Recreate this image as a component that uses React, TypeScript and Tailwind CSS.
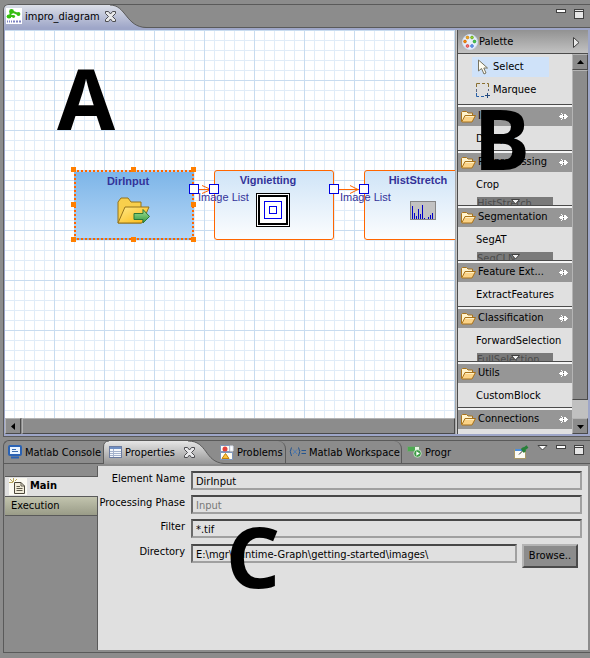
import type { ReactNode } from "react";

const UI_FONT = "font-['DejaVu_Sans_Condensed','DejaVu_Sans',sans-serif]";
const DIAGRAM_FONT = "font-['Liberation_Sans',Arial,sans-serif]";

/* ---------- icons ---------- */

function DiagramIcon() {
  return (
    <svg width="16" height="16" viewBox="0 0 16 16" className="shrink-0">
      <rect width="16" height="16" fill="#fff" />
      <path d="M5 3 L4 9 M5 3 L12 6 M2 8 H7" stroke="#3cb81c" strokeWidth="2" fill="none" />
      <circle cx="5.5" cy="3.5" r="2.4" fill="#35c00f" />
      <circle cx="12.5" cy="6" r="1.9" fill="#35c00f" />
      <ellipse cx="3" cy="8.5" rx="2.4" ry="1.9" fill="#35c00f" />
      <ellipse cx="7.5" cy="8.5" rx="1.6" ry="1.4" fill="#35c00f" />
      <path d="M1 13.5h1M3 13.5h1M5 13.5h1M7 13.5h2M10 13.5h2M13 13.5h2" stroke="#7a80c0" strokeWidth="2" />
    </svg>
  );
}

function CloseIcon() {
  return (
    <svg width="11" height="11" viewBox="0 0 11 11">
      <path
        d="M.5 .5H3.5L5.5 3 7.500 .5H10.500V2.500L7.500 5.500 10.500 8.500V10.500H7.500L5.500 8 3.500 10.500H.5V8.500L3.500 5.500 .5 2.500Z"
        fill="#e8e8ea"
        stroke="#4c4c50"
      />
    </svg>
  );
}

function MinimizeIcon() {
  return (
    <svg width="10" height="4" viewBox="0 0 10 4">
      <rect x=".5" y=".5" width="9" height="3" fill="#fff" stroke="#404040" />
    </svg>
  );
}

function MaximizeIcon() {
  return (
    <svg width="10" height="10" viewBox="0 0 10 10">
      <rect x=".5" y=".5" width="9" height="9" fill="#e6e6e6" stroke="#404040" />
      <path d="M1 2.500H9" stroke="#404040" />
    </svg>
  );
}

function PaletteIcon() {
  return (
    <svg width="16" height="16" viewBox="0 0 16 16">
      <circle cx="8" cy="8" r="7.500" fill="#e9eff9" stroke="#cddcf2" />
      <circle cx="5.500" cy="3.500" r="1.400" fill="#f3a51c" stroke="#b87307" strokeWidth=".6" />
      <circle cx="10" cy="3.500" r="1.400" fill="#9bd32d" stroke="#4f9410" strokeWidth=".6" />
      <circle cx="3" cy="7.500" r="1.400" fill="#ff8b00" stroke="#b85b00" strokeWidth=".6" />
      <circle cx="12.500" cy="7.500" r="1.400" fill="#44cb4a" stroke="#148a25" strokeWidth=".6" />
      <circle cx="5.500" cy="12" r="1.400" fill="#f17878" stroke="#cc1a1a" strokeWidth=".6" />
      <circle cx="10" cy="12" r="1.400" fill="#7aa5f0" stroke="#1755c2" strokeWidth=".6" />
    </svg>
  );
}

function CursorIcon() {
  return (
    <svg width="12" height="16" viewBox="0 0 12 16">
      <path
        d="M1.500 1V12L4.500 9.500 7 15 9 14 6.800 9H10.500Z"
        fill="#fffdf2"
        stroke="#77735f"
      />
    </svg>
  );
}

function MarqueeIcon() {
  return (
    <svg width="15" height="15" viewBox="0 0 15 15" fill="none">
      <path d="M.5 4V.5H4M6 .5H9M11 .5H12.500V4" stroke="#8a7030" />
      <path d="M.5 6V9M12.500 6V8" stroke="#5c6880" />
      <path d="M.5 10V13.500H3M5 13.500H8" stroke="#2760a8" />
      <path d="M11.500 10V15M9 12.500H14" stroke="#24497c" />
    </svg>
  );
}

function FolderIcon() {
  return (
    <svg width="15" height="12" viewBox="0 0 15 12" className="shrink-0">
      <path d="M.5 10.500V1.500L1.500 .5H5.500L7 2H11.500V4.500" fill="#fff3cc" stroke="#a9731c" />
      <path d="M.8 10.800L4 4.500H14.500L11 11H1.200Z" fill="#fbd387" stroke="#a9731c" />
      <path d="M4.600 5.500H13" stroke="#fff0c4" />
    </svg>
  );
}

function PinIcon() {
  return (
    <svg width="9" height="7" viewBox="0 0 9 7" shapeRendering="crispEdges" className="shrink-0">
      <path d="M0 3H9V4H0ZM1 2H3V1H2V0H3V1H4V6H3V7H2V6H3V5H1ZM5 1H6V2H8V5H6V6H5Z" fill="#fff" />
      <path d="M6 1H7V2H8V5H7V6H6Z" fill="#fff" />
      <path d="M4 2H5V3H4ZM4 4H5V5H4Z" fill="#6e6e6e" />
    </svg>
  );
}

function OpenFolderArrowIcon() {
  return (
    <svg width="33" height="28" viewBox="0 0 33 28">
      <defs>
        <linearGradient id="folderFill" x1="0" y1="0" x2="1" y2="1">
          <stop offset="0" stopColor="#ffe98a" />
          <stop offset="1" stopColor="#fbb90f" />
        </linearGradient>
        <linearGradient id="arrowFill" x1="0" y1="0" x2="0" y2="1">
          <stop offset="0" stopColor="#a9e594" />
          <stop offset="1" stopColor="#2c9440" />
        </linearGradient>
      </defs>
      <path d="M1 26V5L4 1H11L14 5H24V12L24 26Z" fill="#f8cf4c" stroke="#94721a" />
      <path d="M1 26L8 10H32L25 26Z" fill="url(#folderFill)" stroke="#94721a" />
      <path d="M17 16.500H26V12.500L32.500 19.500 26 26V22.500H17Z" fill="url(#arrowFill)" stroke="#2c7838" />
    </svg>
  );
}

function VignetteIcon() {
  return (
    <svg width="34" height="34" viewBox="0 0 34 34" fill="none">
      <rect x=".5" y=".5" width="33" height="33" fill="#fff" stroke="#000" />
      <rect x="3" y="3" width="28" height="28" stroke="#000" strokeWidth="2" />
      <rect x="8.500" y="8.500" width="17" height="17" stroke="#00e" />
      <rect x="13.500" y="13.500" width="7" height="7" stroke="#00e" />
    </svg>
  );
}

function HistogramIcon() {
  return (
    <svg width="26" height="19" viewBox="0 0 26 19">
      <rect x=".5" y=".5" width="25" height="18" fill="#c2c2c2" stroke="#858585" />
      <path
        d="M2.500 18V5M4.500 18V12M6.500 18V15M8.500 18V8M10.500 18V13M12.500 18V4M14.500 18V17M18.500 18V16M20.500 18V14M22.500 18V12"
        stroke="#0000c8"
      />
    </svg>
  );
}

function ConsoleIcon() {
  return (
    <svg width="14" height="14" viewBox="0 0 14 14">
      <rect x="1" y="1" width="12" height="9" rx="1" fill="#e9f3ff" stroke="#2a62b4" strokeWidth="2" />
      <path d="M4 4.500H8M4 6.500H10" stroke="#3b6cae" />
      <path d="M3 12.500H11" stroke="#2a62b4" strokeWidth="2" />
    </svg>
  );
}

function TableIcon() {
  return (
    <svg width="13" height="12" viewBox="0 0 13 12">
      <rect x=".5" y=".5" width="12" height="11" fill="#f4f7fb" stroke="#6b7ba0" />
      <rect x="1" y="1" width="11" height="2" fill="#6f8fc4" />
      <path d="M1 5.500H12M1 7.500H12M1 9.500H12M4.500 3V11" stroke="#a4b2cc" />
    </svg>
  );
}

function ProblemsIcon() {
  return (
    <svg width="14" height="15" viewBox="0 0 14 15">
      <path d="M.5 .5H9.500V6.500H.5ZM.5 7.500H12.500V14.500H.5Z" fill="#fffdf4" stroke="#7d96bd" />
      <path d="M10 1H13V6H10Z" fill="#fff" stroke="#dfe6f2" />
      <circle cx="5" cy="4" r="2.500" fill="#e2423e" />
      <path d="M5.500 8.500L9 13.500H2Z" fill="#fbc23c" stroke="#c4820c" />
    </svg>
  );
}

function VariablesIcon() {
  return (
    <svg width="17" height="10" viewBox="0 0 17 10" fill="none" stroke="#25558f">
      <path d="M2.500 .5Q0 4.500 2.500 9M9.500 .5Q12 4.500 9.500 9" />
      <path d="M4 2.500L8 7M8 2.500L4 7" stroke="#4c7ab4" />
      <path d="M12.500 3.500H17M12.500 6.500H17" />
    </svg>
  );
}

function ProgressIcon() {
  return (
    <svg width="15" height="12" viewBox="0 0 15 12">
      <rect x=".5" y=".5" width="12" height="5" fill="#e8f4e4" stroke="#7d9a7d" />
      <rect x="1" y="1" width="7" height="4" fill="#4ea952" />
      <circle cx="10.500" cy="7.500" r="3.800" fill="#3f9c47" stroke="#d6ecd6" strokeWidth=".8" />
      <path d="M9.300 5.300V9.700L12.800 7.500Z" fill="#fff" />
    </svg>
  );
}

function PinViewIcon() {
  return (
    <svg width="15" height="14" viewBox="0 0 15 14">
      <rect x=".5" y="4.500" width="11" height="9" fill="#fdfcf6" stroke="#a89868" />
      <rect x="1" y="4" width="8" height="2" fill="#4d8edb" />
      <path d="M5 9.500L9 5.500" stroke="#333" />
      <path d="M8 3L11 7M9.500 4.500L13.500 1.500" stroke="#28803a" strokeWidth="3" />
    </svg>
  );
}

function MenuIcon() {
  return (
    <svg width="11" height="6" viewBox="0 0 11 6">
      <path d="M1 .5H10L5.500 5Z" fill="#fff" stroke="#404040" />
    </svg>
  );
}

function PageIcon() {
  return (
    <svg width="18" height="17" viewBox="0 0 18 17" className="shrink-0">
      <rect width="18" height="17" fill="#fbfaf2" />
      <path d="M5.500 4.500H12L15.500 8V15.500H5.500Z" fill="#f2edda" stroke="#4b473a" />
      <path d="M12 4.500V8H15.500M7.500 8.500H11M7.500 10.500H13.500M7.500 12.500H13.500" stroke="#5f5b4c" fill="none" />
      <path d="M4.500 0V4M0 4.500H4M1 1L4 4M8 1L6 3" stroke="#b9a860" />
    </svg>
  );
}

/* ---------- scroll bars ---------- */

const RAISED =
  "border border-t-[#b4b4b4] border-l-[#b4b4b4] border-r-[#4a4a4a] border-b-[#4a4a4a] bg-[#8c8c8c]";

function ArrowButton({ label, path }: { label: string; path: string }) {
  return (
    <button aria-label={label} className={`flex size-4 shrink-0 items-center justify-center ${RAISED}`}>
      <svg width="7" height="7" viewBox="0 0 7 7">
        <path d={path} fill="#000" />
      </svg>
    </button>
  );
}

/* ---------- diagram ---------- */

function Node({ title, place, look, icon }: { title: string; place: string; look: string; icon: ReactNode }) {
  return (
    <div className={`absolute top-[140px] flex h-[70px] w-[120px] flex-col ${place} ${look}`}>
      <h3 className="mt-[3px] pr-3 text-center leading-3 font-bold">{title}</h3>
      <div className="flex h-12 items-center justify-center pr-[2px]">{icon}</div>
    </div>
  );
}

const HANDLES = [
  "left-[66px] top-[137px]",
  "left-[126px] top-[137px]",
  "left-[186px] top-[137px]",
  "left-[66px] top-[172px]",
  "left-[186px] top-[172px]",
  "left-[66px] top-[207px]",
  "left-[126px] top-[207px]",
  "left-[186px] top-[207px]",
];
const PORTS = ["left-[184px]", "left-[204px]", "left-[324px]", "left-[354px]"];

function Canvas() {
  return (
    <div
      className={`relative min-h-0 flex-1 overflow-hidden bg-white text-[11px] text-[#333399] ${DIAGRAM_FONT}`}
    >
      <svg className="absolute inset-0 size-full">
        <defs>
          <pattern id="grid" width="50" height="50" patternUnits="userSpaceOnUse">
            <path
              d="M9.500 0V50M19.500 0V50M29.500 0V50M39.500 0V50M0 10.500H50M0 20.500H50M0 30.500H50M0 40.500H50"
              stroke="#e0ecf8"
            />
            <path d="M49.500 0V50M0 .5H50" stroke="#c8dcf0" />
          </pattern>
        </defs>
        <rect width="100%" height="100%" fill="url(#grid)" />
      </svg>
      <Node
        title="DirInput"
        place="left-[69px]"
        look="border-2 border-dotted border-[#ff6600] bg-linear-to-b from-[#7db5e8] to-[#b4d6f6]"
        icon={<OpenFolderArrowIcon />}
      />
      <Node
        title="Vignietting"
        place="left-[209px]"
        look="rounded-[3px] border border-[#ff6600] bg-linear-to-b from-[#cfe4f7] to-[#fcfdfe]"
        icon={<VignetteIcon />}
      />
      <Node
        title="HistStretch"
        place="left-[359px]"
        look="rounded-[3px] border border-[#ff6600] bg-linear-to-b from-[#cfe4f7] to-[#fcfdfe]"
        icon={<HistogramIcon />}
      />
      <svg width="200" height="12" viewBox="0 0 200 12" className="absolute top-[153px] left-[180px]" fill="none">
        <path d="M14 6.500H24M17 2.500L26 6.500 17 10.500" stroke="#ff6600" />
        <path d="M154 6.500H174M165 2.500L173 6.500 165 10.500" stroke="#ff6600" />
      </svg>
      {HANDLES.map((h) => (
        <span key={h} className={`absolute size-[5px] bg-[#ff7f00] ${h}`} />
      ))}
      {PORTS.map((p) => (
        <span key={p} className={`absolute top-[154px] size-[10px] border border-[#0000e0] bg-white ${p}`} />
      ))}
      <span className="absolute top-[161px] left-[193px] leading-3">Image List</span>
      <span className="absolute top-[161px] left-[335px] leading-3">Image List</span>
    </div>
  );
}

/* ---------- palette ---------- */

function Drawer({ title, item, more }: { title: string; item?: string; more?: string }) {
  return (
    <section className="shrink-0">
      <div className="h-px bg-[#4c4c4c]" />
      <div className="h-[2px] bg-[#f4f4f4]" />
      <h3 className="flex h-[19px] items-center bg-[#969696] pr-1 pl-[3px]">
        <FolderIcon />
        <span className="ml-[2px] flex-1 whitespace-nowrap">{title}</span>
        <PinIcon />
      </h3>
      <div className="h-6 pt-[2px] pl-[18px]">
        {item && <button className="block h-[22px] whitespace-nowrap text-black">{item}</button>}
      </div>
      {more && (
        <div className="flex h-[9px] items-end pl-[19px]">
          <div className="relative h-2 w-[76px] overflow-hidden bg-[#7a7a7a] leading-[14px] text-[#4c4c4c]">
            <span>{more}</span>
            <svg width="9" height="6" viewBox="0 0 9 6" className="absolute top-[2px] left-[34px]">
              <path d="M.5 .5H8.500L4.500 5Z" fill="#f0f0f0" stroke="#404040" />
            </svg>
          </div>
        </div>
      )}
    </section>
  );
}

function Palette() {
  return (
    <aside className="flex w-[130px] shrink-0 flex-col bg-[#e0e0e0]">
      <h2 className="flex h-6 shrink-0 items-center border-b border-[#4c4c4c] bg-linear-to-b from-[#929292] to-[#c2c2c2] pt-px pr-2 pl-1">
        <PaletteIcon />
        <span className="ml-px flex-1">Palette</span>
        <svg width="7" height="11" viewBox="0 0 7 11">
          <path d="M.5 .5V10.500L6 5.500Z" fill="#e8e8e8" stroke="#404040" />
        </svg>
      </h2>
      <div className="flex min-h-0 flex-1">
        <div className="flex min-w-0 flex-1 flex-col overflow-hidden">
          <div className="flex h-[50px] shrink-0 flex-col gap-[3px] pt-[3px] pl-[14px]">
            <button className="flex h-5 w-[77px] items-center gap-1 bg-[#cfe2f9] pl-[5px]">
              <CursorIcon />
              Select
            </button>
            <button className="flex h-5 w-[77px] items-center gap-[2px] pl-1">
              <MarqueeIcon />
              Marquee
            </button>
          </div>
          <Drawer title="Input" item="DirInput" />
          <Drawer title="Preprocessing" item="Crop" more="HistStretch" />
          <Drawer title="Segmentation" item="SegAT" more="SegCLN" />
          <Drawer title="Feature Ext..." item="ExtractFeatures" />
          <Drawer title="Classification" item="ForwardSelection" more="FullSelection" />
          <Drawer title="Utils" item="CustomBlock" />
          <Drawer title="Connections" />
        </div>
        <div className="flex w-4 shrink-0 flex-col bg-[#c0c0c0]">
          <ArrowButton label="Scroll up" path="M0 5L3.500 1 7 5Z" />
          <div className={`flex-1 ${RAISED}`} />
          <div className="h-[18px]" />
          <ArrowButton label="Scroll down" path="M0 2L3.500 6 7 2Z" />
        </div>
      </div>
    </aside>
  );
}

/* ---------- editor ---------- */

function Editor() {
  return (
    <section className="ml-[3px] flex min-h-0 flex-1 flex-col rounded-tl-md border-t border-b border-l border-[#5a5a5a]">
      <header className="relative flex h-[23px] shrink-0 items-center border-b border-[#5a5a5a] pr-[6px]">
        <svg width="144" height="23" viewBox="0 0 144 23" className="absolute top-0 left-0">
          <defs>
            <linearGradient id="editorTab" x1="0" y1="0" x2="0" y2="1">
              <stop offset="0" stopColor="#dcdfe8" />
              <stop offset="1" stopColor="#9ea6c8" />
            </linearGradient>
          </defs>
          <path d="M0 23V5Q0 0 5 0H106C122 0 122 22 142 22.500V23Z" fill="url(#editorTab)" />
          <path d="M106 0C122 0 122 22 142 22.500" fill="none" stroke="#5a5a5a" />
        </svg>
        <div role="tab" className="relative flex items-center pl-[2px]">
          <DiagramIcon />
          <span className="ml-[3px] pt-[2px]">impro_diagram</span>
        </div>
        <button aria-label="Close impro_diagram" className="relative ml-[5px]">
          <CloseIcon />
        </button>
        <div className="ml-auto flex h-full items-start gap-2 pt-1">
          <button aria-label="Minimize">
            <MinimizeIcon />
          </button>
          <button aria-label="Maximize">
            <MaximizeIcon />
          </button>
        </div>
      </header>
      <div className="flex min-h-0 flex-1 border-2 border-l border-[#9ea6c8]">
        <div className="flex min-w-0 flex-1 flex-col">
          <Canvas />
          <div className="flex h-4 shrink-0 gap-px bg-[#8c8c8c]">
            <ArrowButton label="Scroll left" path="M5 0L1 3.500 5 7Z" />
            <div className={`flex-1 ${RAISED}`} />
          </div>
        </div>
        <div className="w-[3px] shrink-0 border-x border-l-[#a8a8a8] border-r-[#4c4c4c] bg-[#c8c8c8]" />
        <Palette />
      </div>
    </section>
  );
}

/* ---------- properties view ---------- */

function ViewTab({ label, icon, size }: { label: string; icon: ReactNode; size: string }) {
  return (
    <button role="tab" className={`flex h-full shrink-0 items-center gap-[3px] whitespace-nowrap ${size}`}>
      {icon}
      <span className="pt-[3px]">{label}</span>
    </button>
  );
}

const FIELD =
  "h-[19px] min-w-0 flex-1 border-2 border-t-[#484848] border-l-[#6a6a6a] border-r-[#a0a0a0] border-b-[#a0a0a0] bg-[#e0e0e0] px-[3px] pt-px";

function Field({ id, label, value, muted, children }: { id: string; label: string; value: string; muted?: boolean; children?: ReactNode }) {
  return (
    <div className="flex items-start">
      <label htmlFor={id} className="w-[93px] shrink-0 pr-[6px] text-right leading-4 whitespace-nowrap">
        {label}
      </label>
      <input id={id} defaultValue={value} readOnly={muted} className={`${FIELD} ${muted ? "text-[#787878]" : ""}`} />
      {children}
    </div>
  );
}

function Properties() {
  return (
    <section className="mt-[3px] mb-[5px] ml-[3px] flex h-[213px] shrink-0 flex-col rounded-tl-md border-t border-b border-l border-[#5a5a5a]">
      <header className="relative flex h-[23px] shrink-0 items-center border-b border-[#5a5a5a] pr-[6px]">
        <svg width="222" height="23" viewBox="0 0 222 23" className="absolute top-0 left-0">
          <defs>
            <linearGradient id="viewTab" x1="0" y1="0" x2="0" y2="1">
              <stop offset="0" stopColor="#e6e6e6" />
              <stop offset="1" stopColor="#969696" />
            </linearGradient>
          </defs>
          <path d="M99.500 23V6Q99.500 0 105 0H184C204 0 200 21 220 22.500V23Z" fill="url(#viewTab)" />
          <path d="M99.500 23V6Q99.500 0 105 0M184 0C204 0 200 21 220 22.500" fill="none" stroke="#5a5a5a" />
        </svg>
        <div role="tablist" className="relative flex h-full">
          <ViewTab size="w-[99px] pl-1" label="Matlab Console" icon={<ConsoleIcon />} />
          <ViewTab size="w-[77px] pl-[6px]" label="Properties" icon={<TableIcon />} />
          <button aria-label="Close Properties" className="w-[40px] pl-1">
            <CloseIcon />
          </button>
          <ViewTab size="w-[66px] rounded-tr-lg border-r border-[#5a5a5a]" label="Problems" icon={<ProblemsIcon />} />
          <ViewTab size="w-[116px] rounded-tr-lg border-r border-[#5a5a5a] pl-[3px]" label="Matlab Workspace" icon={<VariablesIcon />} />
          <ViewTab size="pl-[5px]" label="Progr" icon={<ProgressIcon />} />
        </div>
        <div className="ml-auto flex h-full items-start gap-2 pt-1">
          <button aria-label="Pin view">
            <PinViewIcon />
          </button>
          <button aria-label="View menu">
            <MenuIcon />
          </button>
          <button aria-label="Minimize">
            <MinimizeIcon />
          </button>
          <button aria-label="Maximize">
            <MaximizeIcon />
          </button>
        </div>
      </header>
      <div className="flex min-h-0 flex-1 border-2 border-l border-[#8c8c8c]">
        <nav className="flex w-[93px] shrink-0 flex-col">
          <div className="h-[11px] border-r border-b border-[#5a5a5a]" />
          <button className="flex h-[19px] items-center bg-[#e0e0e0] pl-1 font-bold">
            <PageIcon />
            <span className="ml-[3px]">Main</span>
          </button>
          <button className="h-5 border border-l-0 border-[#5a5a5a] bg-linear-to-b from-[#c2c4ae] to-[#9a9c88] pl-[6px] text-left">
            Execution
          </button>
          <div className="flex-1 border-r border-[#5a5a5a]" />
        </nav>
        <form className="flex min-w-0 flex-1 flex-col gap-[5px] bg-[#e0e0e0] py-[5px] pr-[6px]">
          <Field id="element-name" label="Element Name" value="DirInput" />
          <Field id="phase" label="Processing Phase" value="Input" muted />
          <Field id="filter" label="Filter" value="*.tif" />
          <div className="pt-px">
            <Field id="directory" label="Directory" value="E:\mgr\Runtime-Graph\getting-started\images\">
              <button type="button" className="mr-1 ml-[5px] h-6 w-[56px] border-2 border-t-[#b4b4b4] border-l-[#b4b4b4] border-r-[#4a4a4a] border-b-[#4a4a4a] bg-[#8c8c8c]">
                Browse..
              </button>
            </Field>
          </div>
        </form>
      </div>
    </section>
  );
}

const MARKERS = [
  { letter: "A", place: "top-[56px] left-[57px]" },
  { letter: "B", place: "top-[96px] left-[474px]" },
  { letter: "C", place: "top-[514px] left-[226px]" },
];

export default function App() {
  return (
    <main className={`relative flex h-screen min-h-[640px] flex-col bg-[#8c8c8c] pt-1 text-[11px] text-black ${UI_FONT}`}>
      <Editor />
      <Properties />
      {MARKERS.map((m) => (
        <span
          key={m.letter}
          className={`pointer-events-none absolute font-['Noto_Sans',sans-serif] text-[84px] leading-[84px] font-bold ${m.place}`}
        >
          {m.letter}
        </span>
      ))}
    </main>
  );
}
